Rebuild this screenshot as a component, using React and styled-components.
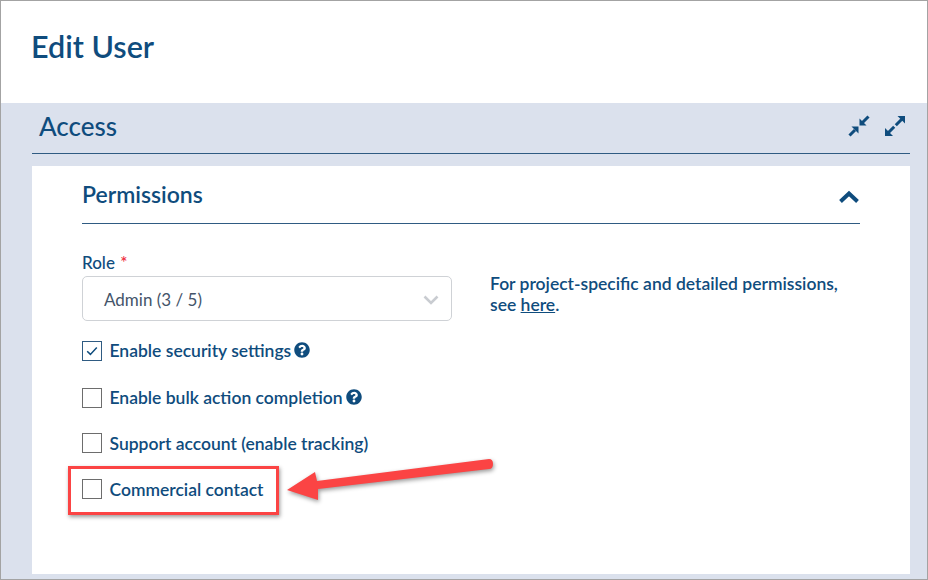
import React from 'react';
import styled, { createGlobalStyle } from 'styled-components';
import { FaQuestionCircle } from 'react-icons/fa';

const NAVY = '#0f4c7d';

const GlobalStyle = createGlobalStyle`
  html, body {
    margin: 0;
    padding: 0;
    background: #fff;
  }
  * { box-sizing: border-box; }
`;

const CompressIcon = () => (
  <svg width="22" height="22" viewBox="0 0 22 22">
    <path d="M11.500 10.500 L11.500 3.500 L18.500 10.500 Z" fill={NAVY} />
    <path d="M14.500 7.500 L20.500 1.500" stroke={NAVY} strokeWidth="3" />
    <path d="M10.500 11.500 L3.500 11.500 L10.500 18.500 Z" fill={NAVY} />
    <path d="M7 15 L1.500 20.500" stroke={NAVY} strokeWidth="3" />
  </svg>
);

const ExpandIcon = () => (
  <svg width="22" height="22" viewBox="0 0 22 22">
    <path d="M21 1 L13.500 1 L21 8.500 Z" fill={NAVY} />
    <path d="M1 21 L1 13 L9 21 Z" fill={NAVY} />
    <path d="M18 4 L11.800 10.200 M10.200 11.800 L4 18" stroke={NAVY} strokeWidth="3" />
  </svg>
);

const ChevronUp = () => (
  <CollapseIcon width="22" height="14" viewBox="0 0 22 14">
    <path d="M2.500 11.500 L11 3.500 L19.500 11.500" fill="none" stroke={NAVY} strokeWidth="4" strokeLinejoin="miter" />
  </CollapseIcon>
);

const ChevronDown = () => (
  <svg width="16" height="10" viewBox="0 0 16 10">
    <path d="M1.500 1.500 L8 8 L14.500 1.500" fill="none" stroke="#c9ccd1" strokeWidth="2.600" />
  </svg>
);

const CheckMark = () => (
  <svg width="12" height="10" viewBox="0 0 12 10">
    <path d="M1.200 5.200 L4.400 8.400 L10.800 1.500" fill="none" stroke={NAVY} strokeWidth="1.500" />
  </svg>
);

const rows = [
  { label: 'Enable security settings', checked: true, help: true, height: 47 },
  { label: 'Enable bulk action completion', help: true, height: 45 },
  { label: 'Support account (enable tracking)', height: 46 },
  { label: 'Commercial contact', height: 20 },
];

const App = () => (
  <Root>
    <GlobalStyle />
    <Header>
      <PageTitle>Edit User</PageTitle>
    </Header>
    <Body>
      <SectionBar>
        <SectionTitle>Access</SectionTitle>
        <SectionTools>
          <CompressIcon />
          <ExpandIcon />
        </SectionTools>
      </SectionBar>
      <Panel>
        <PanelHead>
          <PanelTitle>Permissions</PanelTitle>
          <ChevronUp />
        </PanelHead>
        <FormRow>
          <RoleField>
            <FieldLabel>Role <Required>*</Required></FieldLabel>
            <Select>
              <span>Admin (3 / 5)</span>
              <ChevronDown />
            </Select>
          </RoleField>
          <Note>
            For project-specific and detailed permissions, see <a href="#here">here</a>.
          </Note>
        </FormRow>
        <CheckList>
          {rows.map(row => (
            <CheckRow key={row.label} _height={row.height}>
              <Box $checked={row.checked}>{row.checked && <CheckMark />}</Box>
              <CheckLabel $lift={row.help}>{row.label}</CheckLabel>
              {row.help && <HelpIcon />}
            </CheckRow>
          ))}
          <Highlight />
          <Arrow viewBox="0 0 206 44" width="206" height="44">
            <path
              d="M0 32 L28 14 L30 23 L202 1 Q206 1 206 6 Q206 11 202 11 L31 31 L31 42 Z"
              fill="#fb4444"
            />
          </Arrow>
        </CheckList>
      </Panel>
    </Body>
  </Root>
);

export default App;

const Root = styled.div`
  width: 928px;
  height: 580px;
  display: flex;
  flex-direction: column;
  border: 1px solid #a3a3a3;
  overflow: hidden;
  font-family: Lato, "Open Sans", sans-serif;
  color: ${NAVY};
`;

const Header = styled.header`
  height: 102px;
  padding: 27px 0 0 30px;
  background: #fff;
`;

const PageTitle = styled.h1`
  margin: 0;
  font-size: 30.5px;
  line-height: 36px;
  font-weight: 600;
`;

const Body = styled.main`
  flex: 1;
  display: flex;
  flex-direction: column;
  padding: 0 17px 5px 31px;
  background: #dbe1ed;
`;

const SectionBar = styled.div`
  height: 51px;
  display: flex;
  align-items: center;
  justify-content: space-between;
  padding: 0 4px 4px 7px;
  border-bottom: 1px solid #2f5b82;
`;

const SectionTitle = styled.h2`
  margin: 0;
  font-size: 26px;
  font-weight: 500;
`;

const SectionTools = styled.div`
  display: flex;
  gap: 14px;
  align-items: center;
`;

const Panel = styled.section`
  flex: 1;
  margin-top: 12px;
  padding: 0 50px;
  background: #fff;
`;

const PanelHead = styled.div`
  height: 58px;
  display: flex;
  align-items: center;
  justify-content: space-between;
  padding-right: 0;
  border-bottom: 1px solid #2f5b82;
`;

const PanelTitle = styled.h3`
  margin: 0 0 2px;
  font-size: 23px;
  font-weight: 600;
`;

const CollapseIcon = styled.svg`
  margin-top: 4px;
`;

const FormRow = styled.div`
  display: flex;
  gap: 38px;
  margin-top: 28px;
`;

const RoleField = styled.div`
  width: 370px;
`;

const FieldLabel = styled.div`
  font-size: 17px;
  line-height: 22px;
  height: 24px;
  font-weight: 500;
`;

const Required = styled.span`
  margin-left: 1px;
  color: #ee2a3c;
`;

const Select = styled.div`
  height: 45px;
  display: flex;
  align-items: center;
  justify-content: space-between;
  padding: 2px 12px 0 21px;
  border: 1px solid #cfd2d6;
  border-radius: 5px;
  font-size: 17px;
  color: #44546a;
`;

const Note = styled.p`
  width: 360px;
  margin: 21px 0 0;
  font-size: 17.5px;
  line-height: 21px;
  font-weight: 600;
  a { color: ${NAVY}; }
`;

const CheckList = styled.div`
  position: relative;
  margin-top: 20px;
`;

const CheckRow = styled.label`
  display: flex;
  align-items: flex-start;
  height: ${({ _height }) => _height}px;
`;

const Box = styled.span`
  width: 20px;
  height: 20px;
  flex: none;
  display: flex;
  align-items: center;
  justify-content: center;
  background: #fff;
  border: 1px solid ${({ $checked }) => ($checked ? '#2f5b82' : '#6d6d6d')};
`;

const CheckLabel = styled.span`
  margin-left: 7.500px;
  margin-top: ${({ $lift }) => ($lift ? '-1px' : '0')};
  font-size: 17.500px;
  line-height: 21px;
  font-weight: 600;
`;

const HelpIcon = styled(FaQuestionCircle)`
  margin: 1px 0 0 3px;
  width: 16px;
  height: 16px;
`;

const Highlight = styled.div`
  position: absolute;
  left: -14px;
  top: 125px;
  width: 211px;
  height: 49px;
  border: 3px solid #fb4444;
  box-shadow: 1px 2px 4px rgba(0, 0, 0, 0.4);
`;

const Arrow = styled.svg`
  position: absolute;
  left: 205px;
  top: 117px;
  overflow: visible;
  filter: drop-shadow(1px 2px 2px rgba(0, 0, 0, 0.4));
`;
